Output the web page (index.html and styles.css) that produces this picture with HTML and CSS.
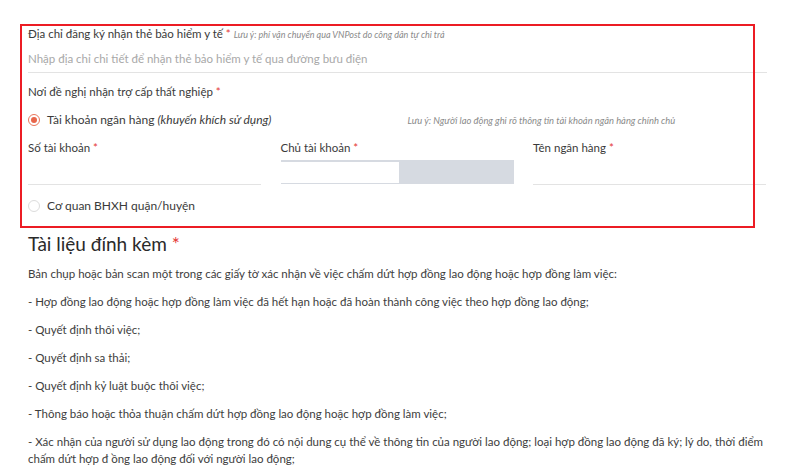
FILE: index.html
```html
<!DOCTYPE html>
<html lang="vi">
<head>
<meta charset="utf-8">
<link rel="stylesheet" href="styles.css">
</head>
<body>
<div class="page">
  <div class="highlight"></div>
  <div class="field">
    <div class="label">Địa chỉ đăng ký nhận thẻ bảo hiểm y tế <span class="req">*</span> <span class="note">Lưu ý: phí vận chuyển qua VNPost do công dân tự chi trả</span></div>
    <div class="input line placeholder">Nhập địa chỉ chi tiết để nhận thẻ bảo hiểm y tế qua đường bưu điện</div>
  </div>
  <div class="label group-title">Nơi đề nghị nhận trợ cấp thất nghiệp <span class="req">*</span></div>
  <div class="radio-row">
    <div class="radio-item"><span class="radio checked"></span><span>Tài khoản ngân hàng <em>(khuyến khích sử dụng)</em></span></div>
    <div class="note">Lưu ý: Người lao động ghi rõ thông tin tài khoản ngân hàng chính chủ</div>
  </div>
  <div class="bank-grid">
    <div class="col">
      <div class="label">Số tài khoản <span class="req">*</span></div>
      <div class="box line"></div>
    </div>
    <div class="col">
      <div class="label">Chủ tài khoản <span class="req">*</span></div>
      <div class="box disabled"><span class="filled"></span></div>
    </div>
    <div class="col">
      <div class="label">Tên ngân hàng <span class="req">*</span></div>
      <div class="box line"></div>
    </div>
  </div>
  <div class="radio-item second"><span class="radio"></span><span>Cơ quan BHXH quận/huyện</span></div>

  <h2 class="heading">Tài liệu đính kèm <span class="req">*</span></h2>
  <p>Bản chụp hoặc bản scan một trong các giấy tờ xác nhận về việc chấm dứt hợp đồng lao động hoặc hợp đồng làm việc:</p>
  <p>- Hợp đồng lao động hoặc hợp đồng làm việc đã hết hạn hoặc đã hoàn thành công việc theo hợp đồng lao động;</p>
  <p>- Quyết định thôi việc;</p>
  <p>- Quyết định sa thải;</p>
  <p>- Quyết định kỷ luật buộc thôi việc;</p>
  <p>- Thông báo hoặc thỏa thuận chấm dứt hợp đồng lao động hoặc hợp đồng làm việc;</p>
  <p>- Xác nhận của người sử dụng lao động trong đó có nội dung cụ thể về thông tin của người lao động; loại hợp đồng lao động đã ký; lý do, thời điểm chấm dứt hợp đ ồng lao động đối với người lao động;</p>
</div>
</body>
</html>
```

FILE: styles.css
```css
html, body {
  margin: 0;
  padding: 0;
  background: #ffffff;
}
body {
  font-family: "Lato", "Open Sans", sans-serif;
  color: #3a3a3a;
  font-size: 11.5px;
}
.page {
  position: relative;
  width: 739px;
  padding: 26px 0 0 28px;
}
.highlight {
  position: absolute;
  left: 20px;
  top: 24px;
  width: 731px;
  height: 200px;
  border: 2px solid #ec1c24;
  pointer-events: none;
}
.label {
  line-height: 16px;
  font-size: 11.5px;
  color: #3a3a3a;
}
.req {
  color: #e53935;
}
.note {
  font-size: 9px;
  font-style: italic;
  color: #8a8a8a;
}
.input {
  line-height: 16px;
  padding: 8px 0 5px;
}
.line {
  border-bottom: 1px solid #e3e3e3;
}
.placeholder {
  color: #a8a8a8;
  font-size: 11.5px;
}
.group-title {
  margin-top: 11px;
}
.radio-row {
  display: grid;
  grid-template-columns: 1fr 1fr;
  column-gap: 20px;
  margin-top: 12px;
  align-items: center;
}
.radio-row .note {
  font-size: 9.4px;
}
.radio-item {
  display: flex;
  align-items: center;
  gap: 7px;
  line-height: 16px;
  font-size: 12px;
}
.radio-item em {
  font-style: italic;
}
.radio {
  width: 10px;
  height: 10px;
  border: 1px solid #dcdcdc;
  border-radius: 50%;
  box-sizing: content-box;
  display: inline-flex;
  align-items: center;
  justify-content: center;
}
.radio.checked {
  border-color: #e9775c;
}
.radio.checked::after {
  content: "";
  width: 6px;
  height: 6px;
  border-radius: 50%;
  background: #e8664a;
}
.bank-grid {
  display: grid;
  grid-template-columns: 233px 233px 233px;
  column-gap: 19.5px;
  margin-top: 12px;
}
.box {
  height: 24px;
  margin-top: 4px;
}
.box.disabled {
  box-sizing: border-box;
  background: #d6dae1;
  padding: 2px 0 1px 0;
  display: flex;
}
.filled {
  width: 118px;
  background: #ffffff;
}
.second {
  margin-top: 13px;
}
.heading {
  margin: 18px 0 0;
  font-size: 19px;
  font-weight: 400;
  line-height: 24px;
  color: #2a2a2a;
}
p {
  margin: 9px 0 0;
  font-size: 11.5px;
  line-height: 17px;
  color: #3d3d3d;
}
p + p {
  margin-top: 11px;
}
```
